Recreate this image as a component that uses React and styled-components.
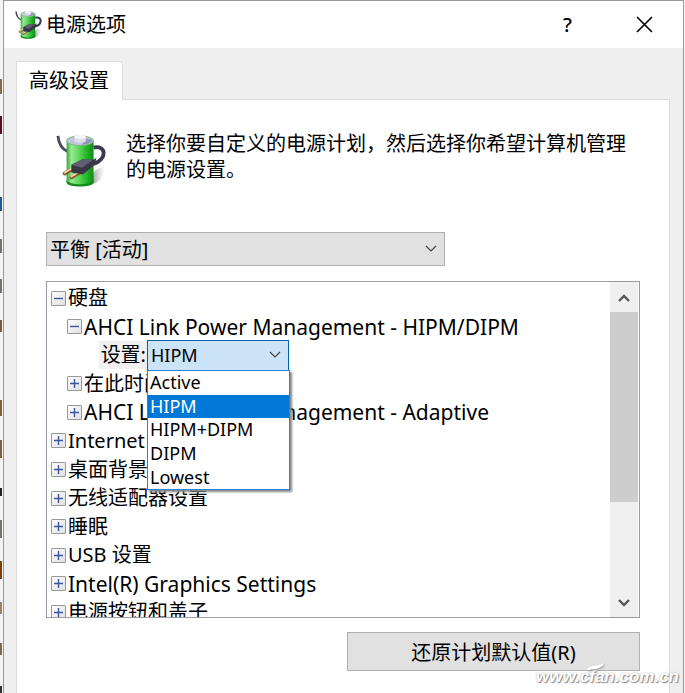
import styled, { createGlobalStyle } from 'styled-components'

const GlobalStyle = createGlobalStyle`
	* {
		box-sizing: border-box;
	}

	body {
		margin: 0;
		color: #000;
		background: #fff;
		font-family: 'Noto Sans', 'Noto Sans CJK SC', sans-serif;
		font-size: 20px;
	}

	button,
	select {
		margin: 0;
		color: inherit;
		font-family: inherit;
	}
`

const tree = [
	{ id: 'disk', level: 0, open: true, text: '硬盘' },
	{ id: 'hipm', level: 1, open: true, latin: true, text: 'AHCI Link Power Management - HIPM/DIPM' },
	{ id: 'mode', setting: true },
	{ id: 'off', level: 1, text: '在此时间后关闭硬盘' },
	{ id: 'adaptive', level: 1, latin: true, text: 'AHCI Link Power Management - Adaptive' },
	{ id: 'ie', level: 0, text: 'Internet Explorer' },
	{ id: 'desktop', level: 0, text: '桌面背景设置' },
	{ id: 'wifi', level: 0, text: '无线适配器设置' },
	{ id: 'sleep', level: 0, text: '睡眠' },
	{ id: 'usb', level: 0, text: 'USB 设置' },
	{ id: 'graphics', level: 0, latin: true, text: 'Intel(R) Graphics Settings' },
	{ id: 'lid', level: 0, text: '电源按钮和盖子' },
]

const modes = ['Active', 'HIPM', 'HIPM+DIPM', 'DIPM', 'Lowest']

// bits of the window that lies behind the dialog: [top, height, color]
const slivers = [
	[79, 15, '#8a6a48'],
	[116, 18, '#5a1020'],
	[197, 14, '#205a90'],
	[239, 14, '#77736c'],
	[279, 14, '#77736c'],
	[320, 12, '#7a5a38'],
	[400, 16, '#8a6040'],
	[440, 18, '#806040'],
	[488, 8, '#222'],
	[520, 18, '#77736c'],
	[561, 18, '#7a4208'],
	[602, 12, '#a08060'],
	[643, 12, '#7a6a50'],
	[686, 7, '#333'],
]

const Battery = ({ size }) => (
	<svg width={size} height={size} viewBox='0 0 52 54' aria-hidden='true'>
		<defs>
			<linearGradient id='cell' x1='0' x2='1' y1='0' y2='0'>
				<stop offset='0' stopColor='#35a83a' />
				<stop offset='.18' stopColor='#9be896' />
				<stop offset='.45' stopColor='#5fd75c' />
				<stop offset='.75' stopColor='#22b428' />
				<stop offset='1' stopColor='#0f8a18' />
			</linearGradient>
			<linearGradient id='shade' x1='0' x2='1' y1='0' y2='0'>
				<stop offset='0' stopColor='#777' stopOpacity='.7' />
				<stop offset='1' stopColor='#bbb' stopOpacity='0' />
			</linearGradient>
		</defs>
		<path d='M37 51c8-2 12-9 13-17-5-1-9 1-13 6z' fill='url(#shade)' />
		<path d='M1 1c1 9 4 14 10 16' fill='none' stroke='#4a4a62' strokeWidth='3' />
		<path d='M10 6v42c0 6 28 6 28 0V6z' fill='url(#cell)' />
		<path d='M10 46c0 7 28 7 28 0v3c0 6-28 6-28 0z' fill='#148a1c' />
		<ellipse cx='24' cy='6' rx='14' ry='5' fill='#c3c5dc' stroke='#6cba74' />
		<path d='M26 10c6 0 10-2 11-4-2-2-5-2-8-2z' fill='#9496b8' />
		<path d='M18 2v4c0 3 12 3 12 0V2z' fill='#dcddec' />
		<ellipse cx='24' cy='2' rx='6' ry='2' fill='#f6f6fb' />
		<path d='M38 13c14-3 14 13 0 17' fill='none' stroke='#3a3a52' strokeWidth='4' />
		<path d='M18 34L8 40M25 38l-10 6' stroke='#7d5a30' strokeWidth='4' strokeLinecap='round' />
		<path d='M18 33L8 39M25 37l-10 6' stroke='#f3d3a0' strokeWidth='2' strokeLinecap='round' />
		<path d='M15 31l12-6 10 1 4-2-2 7-12 10-12-2z' fill='#373746' />
		<path d='M15 31l12-6 10 1-11 8z' fill='#5f5f70' />
	</svg>
)

const Chevron = ({ up, bold, size }) => (
	<svg width={size} height={size} viewBox='0 0 12 12' aria-hidden='true'>
		<path
			d={up ? 'M1 9l5-5 5 5' : 'M1 3l5 5 5-5'}
			fill='none'
			stroke={bold ? '#555' : '#444'}
			strokeWidth={bold ? 2.4 : 1.2}
		/>
	</svg>
)

const Page = styled.div`
	display: flex;
	min-height: 100vh;
	position: relative;
	overflow: hidden;
	padding: 0 1px 0 3px;
	background: #f4f4f4;
`

const Sliver = styled.i`
	position: absolute;
	left: 0;
	top: ${({ $top }) => $top}px;
	width: 2px;
	height: ${({ $height }) => $height}px;
	background: ${({ $color }) => $color};
`

const Dialog = styled.main`
	display: flex;
	flex: 1;
	flex-direction: column;
	min-width: 0;
	border: 1px solid #999;
	border-bottom: 0;
	background: #efefef;
`

const TitleBar = styled.header`
	display: flex;
	align-items: center;
	height: 47px;
	padding-left: 11px;
	background: #fff;
`

const Title = styled.h1`
	flex: 1;
	margin: 0 0 0 3px;
	font-size: 20px;
	font-weight: 400;
	line-height: 28px;
`

const TitleButton = styled.button`
	display: flex;
	align-items: center;
	justify-content: center;
	width: 77px;
	height: 44px;
	padding: 0;
	border: 0;
	background: none;
	font-size: 20px;
	font-weight: 500;
`

const Tabs = styled.div`
	position: relative;
	z-index: 1;
	margin: 13px 0 -1px 12px;
`

const Tab = styled.button`
	display: block;
	height: 39px;
	padding: 0 13px 0 12px;
	border: 1px solid #dcdcdc;
	border-bottom: 0;
	background: #fff;
	font-size: 20px;
	line-height: 38px;
`

const Panel = styled.section`
	display: flex;
	flex: 1;
	flex-direction: column;
	margin: 0 13px 0 12px;
	padding: 30px 29px 22px;
	border: 1px solid #dcdcdc;
	border-bottom: 0;
	background: #fff;
`

const Intro = styled.div`
	display: flex;
	gap: 18px;
	height: 102px;
	padding: 1px 0 0 10px;

	& svg {
		flex: none;
		margin-top: 4px;
	}
`

const IntroText = styled.p`
	margin: 0;
	line-height: 26px;
`

const SelectBox = styled.div`
	display: grid;
	align-items: center;
	width: ${({ $width }) => $width}px;
	max-width: 100%;

	& > * {
		grid-area: 1 / 1;
	}

	& svg {
		justify-self: end;
		margin-right: 8px;
		pointer-events: none;
	}
`

const PlanSelect = styled.select`
	width: 100%;
	height: 34px;
	padding: 0 3px;
	border: 1px solid #b0b0b0;
	border-radius: 0;
	appearance: none;
	background: #e1e1e1;
	font-size: 20px;
`

const ModeSelect = styled(PlanSelect)`
	height: 31px;
	border-color: #0063b1;
	background: #cce4f7;
	font-size: 18px;
`

const TreeBox = styled.div`
	display: flex;
	height: 337px;
	margin-top: 15px;
	border: 1px solid #999ba5;
`

const TreeView = styled.div`
	flex: 1;
	min-width: 0;
	overflow: hidden;
`

const Rows = styled.ul`
	display: grid;
	grid-auto-rows: 1fr;
	height: 345px;
	margin: 0;
	padding: 2px 0 0 4px;
	list-style: none;
`

const Row = styled.li`
	display: flex;
	align-items: center;
	min-height: 0;
	height: 28px;
	padding-left: ${({ $level }) => $level * 16}px;
	font-size: ${({ $latin }) => ($latin ? 21 : 20)}px;
	line-height: 28px;
	white-space: nowrap;
`

const Toggle = styled.button`
	display: flex;
	flex: none;
	align-items: center;
	justify-content: center;
	width: 15px;
	height: 15px;
	margin-right: 2px;
	padding: 0;
	border: 1px solid #989898;
	border-radius: 1px;
	background: linear-gradient(135deg, #fff, #e0e0e0);
`

const SettingRow = styled(Row)`
	position: relative;
	z-index: 1;
	padding-left: 48px;
`

const SettingLabel = styled.label`
	width: 48px;
	padding-right: 1px;
	background: #f0f0f0;
	text-align: right;
`

const Options = styled.ul`
	display: grid;
	grid-auto-rows: 1fr;
	position: absolute;
	top: 29px;
	left: 96px;
	width: 143px;
	height: 120px;
	margin: 0;
	padding: 0;
	border: 1px solid #2484d8;
	background: #fff;
	box-shadow: 2px 2px 2px #888;
	font-size: 18px;
	list-style: none;
`

const Option = styled.li`
	padding-left: 2px;
	line-height: 23px;
	color: ${({ $active }) => ($active ? '#fff' : '#000')};
	background: ${({ $active }) => ($active ? '#0078d7' : '#fff')};
`

const ScrollBar = styled.div`
	display: flex;
	flex: none;
	flex-direction: column;
	width: 28px;
	margin-right: 1px;
	background: #f0f0f0;
`

const ScrollButton = styled.button`
	display: flex;
	align-items: center;
	justify-content: center;
	height: 30px;
	padding: 2px 0 0;
	border: 0;
	background: none;
`

const ScrollTrack = styled.div`
	flex: 1;
`

const ScrollThumb = styled.div`
	height: 190px;
	background: #cdcdcd;
`

const RestoreButton = styled.button`
	align-self: flex-end;
	width: 293px;
	height: 39px;
	margin-top: 14px;
	border: 1px solid #b0b0b0;
	background: #e1e1e1;
	font-size: 20px;
`

const Watermark = styled.div`
	position: absolute;
	right: 6px;
	bottom: 4px;
	z-index: 2;
	color: #fff;
	font-family: 'Liberation Sans', sans-serif;
	font-size: 17px;
	font-style: italic;
	font-weight: 700;
	line-height: 24px;
	text-shadow: 1px 1px 1px #888, 0 0 2px #aaa;

	& svg {
		position: absolute;
		top: -2px;
		left: 50px;
		filter: drop-shadow(1px 1px 1px #999);
	}
`

const TreeRow = ({ level, open, latin, text }) => (
	<Row $level={level} $latin={latin}>
		<Toggle aria-label={text} aria-expanded={Boolean(open)}>
			<svg width='9' height='9' viewBox='0 0 9 9' aria-hidden='true'>
				<path d={open ? 'M0 4.500h9' : 'M0 4.500h9M4.500 0v9'} stroke='#3c56a0' strokeWidth='1.400' />
			</svg>
		</Toggle>
		{text}
	</Row>
)

const ModeRow = () => (
	<SettingRow>
		<SettingLabel htmlFor='mode'>设置:</SettingLabel>
		<SelectBox $width={142}>
			<ModeSelect id='mode' defaultValue='HIPM'>
				{modes.map((mode) => (
					<option key={mode}>{mode}</option>
				))}
			</ModeSelect>
			<Chevron size={12} />
		</SelectBox>
		<Options role='listbox' aria-label='设置'>
			{modes.map((mode) => (
				<Option key={mode} role='option' aria-selected={mode === 'HIPM'} $active={mode === 'HIPM'}>
					{mode}
				</Option>
			))}
		</Options>
	</SettingRow>
)

const App = () => (
	<Page>
		<GlobalStyle />
		{slivers.map(([top, height, color]) => (
			<Sliver key={top} $top={top} $height={height} $color={color} />
		))}
		<Dialog>
			<TitleBar>
				<Battery size={28} />
				<Title>电源选项</Title>
				<TitleButton aria-label='帮助'>?</TitleButton>
				<TitleButton aria-label='关闭'>
					<svg width='17' height='17' viewBox='0 0 17 17' aria-hidden='true'>
						<path d='M1 1l15 15M16 1L1 16' stroke='#000' strokeWidth='1.600' />
					</svg>
				</TitleButton>
			</TitleBar>
			<Tabs role='tablist'>
				<Tab role='tab' aria-selected='true'>高级设置</Tab>
			</Tabs>
			<Panel>
				<Intro>
					<Battery size={52} />
					<IntroText>选择你要自定义的电源计划，然后选择你希望计算机管理的电源设置。</IntroText>
				</Intro>
				<SelectBox $width={399}>
					<PlanSelect aria-label='电源计划'>
						<option>平衡 [活动]</option>
					</PlanSelect>
					<Chevron size={12} />
				</SelectBox>
				<TreeBox>
					<TreeView>
						<Rows>
							{tree.map(({ id, setting, ...item }) =>
								setting ? <ModeRow key={id} /> : <TreeRow key={id} {...item} />
							)}
						</Rows>
					</TreeView>
					<ScrollBar>
						<ScrollButton aria-label='向上'>
							<Chevron up bold size={12} />
						</ScrollButton>
						<ScrollTrack>
							<ScrollThumb />
						</ScrollTrack>
						<ScrollButton aria-label='向下'>
							<Chevron bold size={12} />
						</ScrollButton>
					</ScrollBar>
				</TreeBox>
				<RestoreButton>还原计划默认值(R)</RestoreButton>
			</Panel>
		</Dialog>
		<Watermark>
			www.cfan.com.cn
			<svg width='20' height='8' viewBox='0 0 20 8' aria-hidden='true'>
				<path d='M0 7C4 1 10 4 18 0c-2 6-9 6-18 7z' fill='#fff' />
			</svg>
		</Watermark>
	</Page>
)

export default App
